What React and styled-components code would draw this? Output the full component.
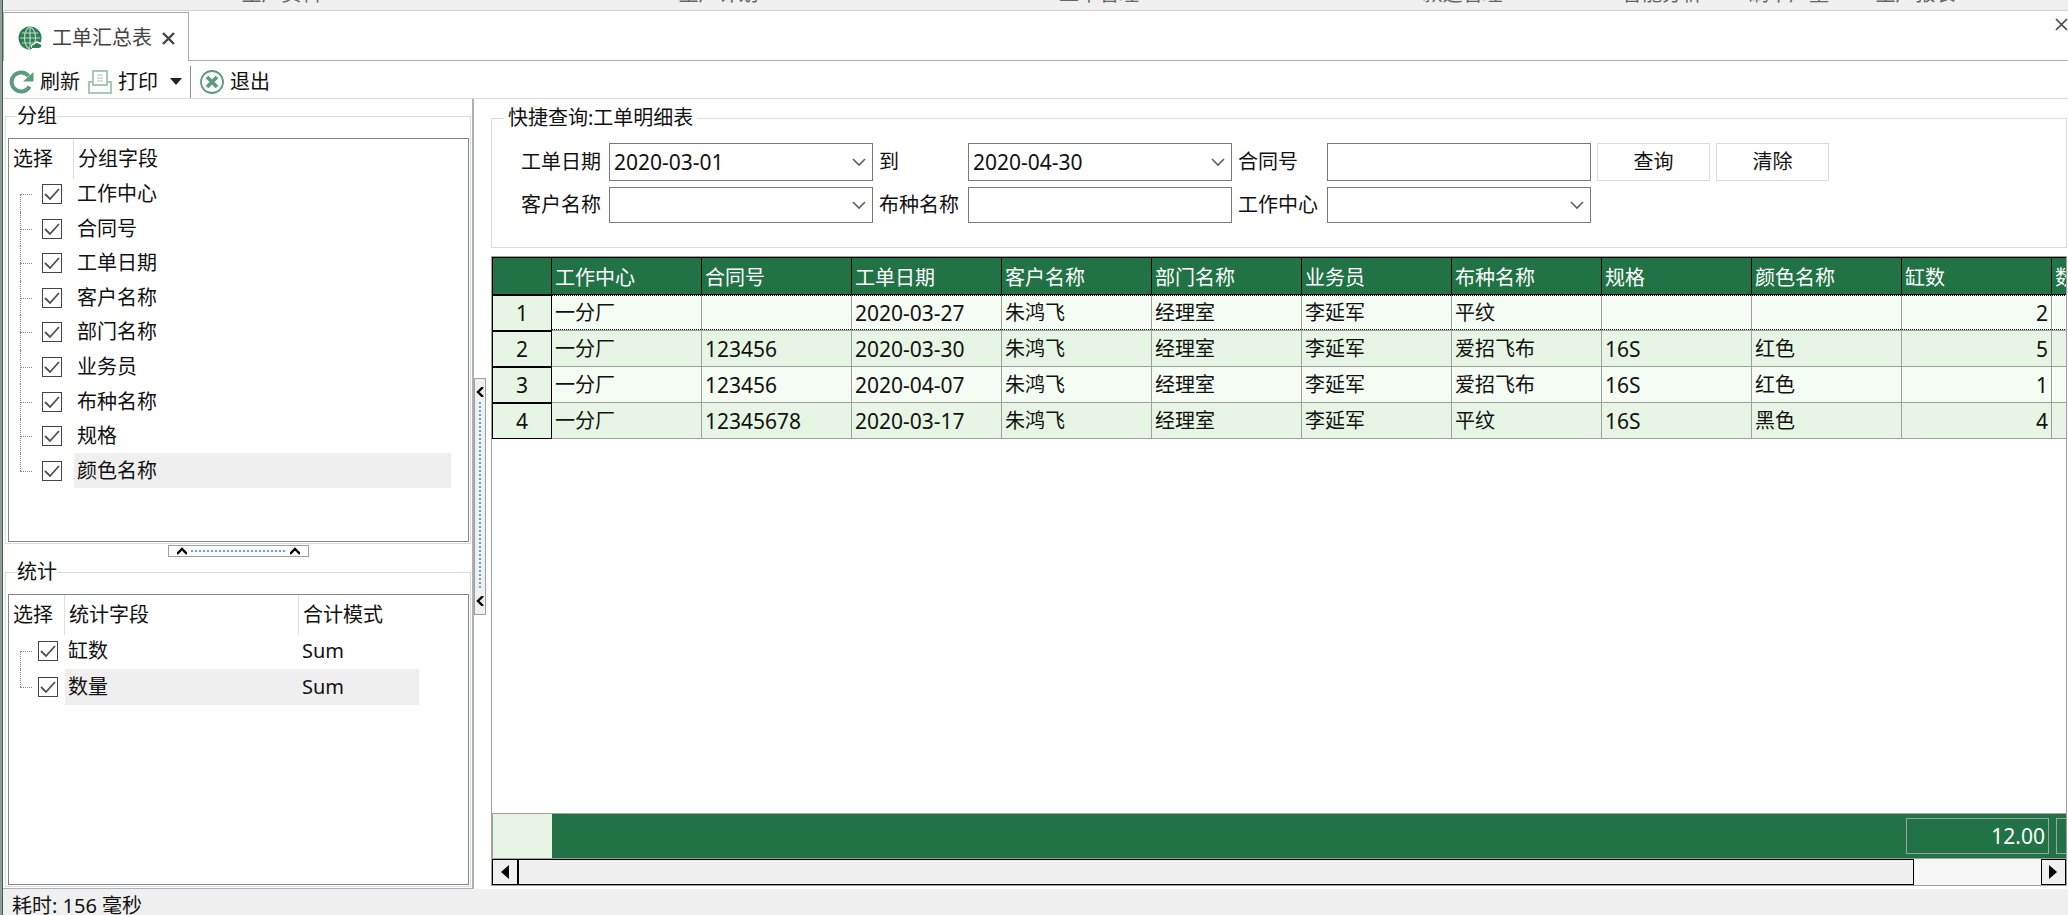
import React from "react";
import styled, { createGlobalStyle, css } from "styled-components";

const green = "#217346";
const grey = "#a0a0a0";
const iconGreen = "#5c9c7b";

const chevron = `url("data:image/svg+xml,%3Csvg xmlns='http://www.w3.org/2000/svg' width='14' height='10' fill='none' stroke='%23606060' stroke-width='1.6'%3E%3Cpath d='M1 2l6 6 6-6'/%3E%3C/svg%3E")`;
const tick = `url("data:image/svg+xml,%3Csvg xmlns='http://www.w3.org/2000/svg' width='18' height='18' fill='none' stroke='%23505050' stroke-width='1.8'%3E%3Cpath d='M2 9l5 5L16 4'/%3E%3C/svg%3E")`;

const GlobalStyle = createGlobalStyle`
  * {
    box-sizing: border-box;
  }
  body {
    margin: 0;
    background: #fff;
    color: #111;
    font: 20px/24px "Noto Sans", "Noto Sans CJK SC", sans-serif;
  }
  button,
  input,
  select {
    font: inherit;
    color: inherit;
  }
`;

const Frame = styled.div`
  border-left: 2px solid #999;
`;

const Window = styled.div`
  display: flex;
  flex-direction: column;
  height: 100vh;
  border-left: 1px solid ${green};
  overflow: hidden;
`;

const Ribbon = styled.nav`
  display: grid;
  grid-template-columns: 557fr 317fr 444fr 283fr 116fr 138fr 115fr 95fr;
  flex: none;
  height: 11px;
  overflow: hidden;
  background: #f0f0f0;
  border-bottom: 1px solid #d2d2d2;
`;

const RibbonGroup = styled.div`
  display: flex;
  align-items: flex-end;
  justify-content: center;
  height: 6px;
  color: #666;
  white-space: nowrap;
`;

const TabBar = styled.div`
  display: flex;
  flex: none;
  height: 50px;
  padding-top: 1px;
`;

const Tab = styled.div`
  display: flex;
  align-items: center;
  gap: 10px;
  padding: 2px 13px 0 14px;
  border: 1px solid #ababab;
  border-bottom: 0;
  color: #444;
`;

const TabRest = styled.div`
  display: flex;
  flex: 1;
  justify-content: flex-end;
  border-bottom: 1px solid #ababab;
  overflow: hidden;
`;

const CloseButton = styled.button`
  display: flex;
  align-items: center;
  height: 24px;
  padding: 0;
  border: 0;
  background: none;
`;

const Toolbar = styled.div`
  display: flex;
  align-items: center;
  flex: none;
  height: 38px;
  padding: 4px 0 0 6px;
  border-bottom: 1px solid #d9d9d9;
`;

const ToolButton = styled.button`
  display: flex;
  align-items: center;
  gap: 6px;
  padding: 0 8px 0 0;
  border: 0;
  background: none;
`;

const ToolDivider = styled.div`
  width: 1px;
  height: 32px;
  margin-right: 9px;
  background: #8a8a8a;
`;

const Body = styled.div`
  display: flex;
  flex: 1;
  min-height: 0;
`;

const Side = styled.aside`
  display: flex;
  flex-direction: column;
  flex: none;
  width: 471px;
  padding: 5px 1px 1px 2px;
  border-right: 2px solid #b0b0b0;
  border-bottom: 1px solid #b0b0b0;
`;

const GroupBox = styled.fieldset`
  display: flex;
  flex-direction: column;
  flex: ${(p) => (p.$fill ? "1" : "none")};
  min-width: 0;
  min-height: 0;
  height: ${(p) => (p.$fill ? "auto" : "440px")};
  margin: 0;
  padding: 10px 1px 1px 2px;
  border: 1px solid #dcdcdc;

  > legend {
    padding: 0;
    margin-left: 9px;
  }
`;

const TreeBox = styled.div`
  flex: 1;
  min-height: 0;
  border: 1px solid #828790;
`;

const TreeHead = styled.div`
  display: grid;
  grid-template-columns: ${(p) => p.$columns};
  height: 38px;
`;

const TreeHeadCell = styled.div`
  padding: 8px 4px;
  border-right: ${(p) => (p.$last ? "0" : "1px solid #e0e0e0")};
`;

const TreeRows = styled.div`
  display: grid;
  grid-auto-rows: 1fr;
  height: ${(p) => p.$height};
`;

const TreeRow = styled.div`
  display: grid;
  grid-template-columns: ${(p) => p.$columns};
  align-items: center;
  padding-right: ${(p) => p.$tail};
`;

const TreeStem = styled.div`
  position: relative;
  display: flex;
  align-items: center;
  justify-content: flex-end;
  height: 100%;
  padding-right: ${(p) => p.$gap};

  &::before {
    content: "";
    position: absolute;
    left: 11px;
    top: ${(p) => (p.$first ? "50%" : "0")};
    bottom: ${(p) => (p.$last ? "50%" : "0")};
    border-left: 1px dotted #888;
  }
  &::after {
    content: "";
    position: absolute;
    left: 11px;
    top: 50%;
    width: 12px;
    border-top: 1px dotted #888;
  }
`;

const Check = styled.input.attrs({ type: "checkbox" })`
  appearance: none;
  width: 20px;
  height: 20px;
  margin: 0;
  border: 1px solid #444;
  background: #fff;

  &:checked {
    background: #fff ${tick} center no-repeat;
  }
`;

const TreeLabel = styled.label`
  display: flex;
  align-items: center;
  height: 100%;
  padding-left: 3px;
  background: ${(p) => (p.$active ? "#efefef" : "transparent")};
`;

const HandleRow = styled.div`
  display: flex;
  justify-content: center;
  flex: none;
  height: 16px;
  padding-top: 1px;
`;

const Handle = styled.div`
  display: flex;
  flex-direction: ${(p) => (p.$vertical ? "column" : "row")};
  align-items: center;
  justify-content: space-between;
  width: ${(p) => (p.$vertical ? "12px" : "141px")};
  height: ${(p) => (p.$vertical ? "237px" : "12px")};
  padding: ${(p) => (p.$vertical ? "8px 0" : "0 8px")};
  border: 1px solid ${grey};
  background: ${(p) => (p.$vertical ? "#f0f0f0" : "#fff")};
`;

const Dots = styled.div`
  ${(p) =>
    p.$vertical
      ? css`
          width: 2px;
          height: 188px;
          background: repeating-linear-gradient(#5aa7e0 0 2px, transparent 2px 4px);
        `
      : css`
          width: 94px;
          height: 2px;
          background: repeating-linear-gradient(90deg, #5aa7e0 0 2px, transparent 2px 4px);
        `}
`;

const Gutter = styled.div`
  display: flex;
  align-items: center;
  flex: none;
  width: 17px;
  padding-top: 4px;
`;

const Main = styled.main`
  display: flex;
  flex-direction: column;
  flex: 1;
  min-width: 0;
  padding: 7px 1px 3px 0;
`;

const QueryBox = styled.fieldset`
  flex: none;
  min-width: 0;
  margin: 0 0 8px;
  padding: 13px 0 24px 29px;
  border: 1px solid #dcdcdc;

  > legend {
    margin-left: -17px;
    padding: 0 4px;
  }
`;

const QueryForm = styled.form`
  display: grid;
  grid-template-columns:
    88px minmax(0, 264px) 95px minmax(0, 264px) 95px minmax(0, 264px)
    113px 113px;
  grid-template-rows: 38px 36px;
  row-gap: 6px;
`;

const FieldLabel = styled.label`
  align-self: center;
  padding-left: ${(p) => (p.$first ? "0" : "6px")};
  white-space: nowrap;
`;

const field = css`
  width: 100%;
  height: 100%;
  padding: 0 4px;
  border: 1px solid #7a7a7a;
  border-radius: 0;
  background: #fff;
`;

const TextField = styled.input`
  ${field}
`;

const SelectField = styled.select`
  ${field}
  appearance: none;
  font-size: 21px;
  background: #fff ${chevron} right 6px center no-repeat;
`;

const QueryButton = styled.button`
  margin-left: 6px;
  margin-right: -6px;
  padding: 0;
  border: 1px solid #dcdcdc;
  background: #fff;

  & + & {
    margin-left: 12px;
    margin-right: -12px;
  }
`;

const GridPanel = styled.section`
  display: flex;
  flex-direction: column;
  flex: 1;
  min-height: 0;
  border: 1px solid ${grey};
`;

const GridView = styled.div`
  flex: 1;
  min-height: 0;
  overflow: hidden;
`;

const DataTable = styled.table`
  width: 1710px;
  table-layout: fixed;
  border-collapse: separate;
  border-spacing: 0;
  border-left: 1px solid #000;
`;

const HeadCell = styled.th`
  width: ${(p) => (p.$index ? "59px" : "150px")};
  height: 38px;
  padding: 3px 3px 0;
  border: solid #000;
  border-width: 1px 1px 1px 0;
  background: ${green};
  color: #fff;
  font-weight: 400;
  text-align: left;
`;

const IndexCell = styled.th`
  height: 36px;
  padding: 0;
  border: solid #000;
  border-width: 1px 1px 1px 0;
  background: #e7f6e4;
  font-size: 21px;
  font-weight: 400;
`;

const Row = styled.tr`
  background: ${(p) => (p.$odd ? "#f5fcf4" : "#e7f6e4")};
`;

const focusLine =
  "repeating-linear-gradient(90deg, #000 0 1px, transparent 1px 2px)";

const Cell = styled.td`
  height: 36px;
  padding: 0 3px;
  border: solid ${grey};
  border-width: 0 1px 1px 0;
  font-size: ${(p) => (p.$latin ? "21px" : "20px")};
  text-align: ${(p) => (p.$right ? "right" : "left")};
  ${(p) =>
    p.$focused &&
    css`
      background:
        ${focusLine} top / 100% 1px no-repeat,
        ${focusLine} bottom / 100% 1px no-repeat;
      background-clip: padding-box;
    `}
`;

const Summary = styled.div`
  display: grid;
  grid-template-columns: 60px 1fr 143px 17px;
  flex: none;
  height: 46px;
  border: solid ${grey};
  border-width: 1px 0;
  background: ${green};
  color: #fff;
`;

const SummaryIndex = styled.div`
  background: #e7f6e4;
  border-left: 1px solid ${grey};
`;

const SummaryTotal = styled.div`
  grid-column: 3;
  display: flex;
  align-items: center;
  justify-content: flex-end;
  margin: 4px 0;
  padding-right: 3px;
  border: 1px solid ${grey};
  font-size: 21px;
`;

const SummaryNext = styled.div`
  margin: 4px 0 4px 7px;
  border: 1px solid ${grey};
  border-right: 0;
`;

const ScrollBar = styled.div`
  display: grid;
  grid-template-columns: 26px 1397fr 127fr 25px;
  flex: none;
  height: 26px;
  background: #f7f7f7;
`;

const ScrollButton = styled.button`
  grid-column: ${(p) => (p.$end ? 4 : 1)};
  display: flex;
  align-items: center;
  justify-content: center;
  padding: 0;
  border: 1px solid #000;
  background: #f0f0f0;
`;

const ScrollThumb = styled.div`
  border: 1px solid #000;
  background: #f0f0f0;
`;

const StatusBar = styled.footer`
  flex: none;
  height: 26px;
  padding: 5px 9px 0;
  overflow: hidden;
  background: #f0f0f0;
`;

const ribbonGroups = [
  "生产资料",
  "生产计划",
  "工单管理",
  "款选管理",
  "智能分析",
  "刷卡产量",
  "生产报表",
  "",
];

const groupFields = [
  "工作中心",
  "合同号",
  "工单日期",
  "客户名称",
  "部门名称",
  "业务员",
  "布种名称",
  "规格",
  "颜色名称",
];

const statFields = ["缸数", "数量"];

const columns = [...groupFields, "缸数", "数量"];

const orders = [
  ["一分厂", "", "2020-03-27", "朱鸿飞", "经理室", "李延军", "平纹", "", "", "2", ""],
  ["一分厂", "123456", "2020-03-30", "朱鸿飞", "经理室", "李延军", "爱招飞布", "16S", "红色", "5", ""],
  ["一分厂", "123456", "2020-04-07", "朱鸿飞", "经理室", "李延军", "爱招飞布", "16S", "红色", "1", ""],
  ["一分厂", "12345678", "2020-03-17", "朱鸿飞", "经理室", "李延军", "平纹", "16S", "黑色", "4", ""],
];

const GlobeIcon = () => (
  <svg width="24" height="24" viewBox="0 0 24 24" fill="none">
    <circle cx="12" cy="12" r="11.5" fill="#2f7d55" />
    <g stroke="#b9d8c7" strokeWidth="1.2">
      <path d="M12 2v20M4 7h16M2 12h20M4 17h16" />
      <ellipse cx="12" cy="12" rx="5.5" ry="10.5" />
    </g>
    <path d="M12 24l1-5 3-2 3-2 4 2 1 7z" fill="#fff" />
    <path d="M14 22a2 2 0 0 1 2-3 3 3 0 0 1 5-1 2 2 0 0 1 2 3l-2 1z" fill="#2f7d55" />
    <path d="M12 19l2 4h-2z" fill="#2f7d55" />
  </svg>
);

const RefreshIcon = () => (
  <svg width="25" height="24" viewBox="0 0 25 24" fill="none">
    <path d="M20.5 16.5A9.5 9.5 0 1 1 19.5 6" stroke={iconGreen} strokeWidth="4" />
    <path d="M24.5 2v9.5H14z" fill={iconGreen} />
  </svg>
);

const PrintIcon = () => (
  <svg width="24" height="24" viewBox="0 0 24 24" fill="none" stroke="#a5cbb5" strokeWidth="2">
    <path d="M5 12H1v11h22V12h-4" />
    <path d="M5 15V1h14v14z" />
    <path d="M9 5h6M9 8h6M9 11h6" strokeWidth="1" />
  </svg>
);

const ExitIcon = () => (
  <svg width="24" height="24" viewBox="0 0 24 24" fill="none" stroke={iconGreen}>
    <circle cx="12" cy="12" r="11" strokeWidth="1.8" />
    <path d="M7 7l10 10M17 7L7 17" strokeWidth="3.8" />
  </svg>
);

const CrossIcon = ({ width = 2.4 }) => (
  <svg width="13" height="13" viewBox="0 0 13 13" stroke="#444" strokeWidth={width}>
    <path d="M1 1l11 11M12 1L1 12" />
  </svg>
);

const Caret = ({ left }) => (
  <svg width="10" height="10" viewBox="0 0 10 10" fill="none" stroke="#000" strokeWidth="2.4">
    <path d={left ? "M8 0L3 5l5 5" : "M0 8l5-5 5 5"} />
  </svg>
);

const GroupFieldTree = () => (
  <GroupBox>
    <legend>分组</legend>
    <TreeBox>
      <TreeHead $columns="65px 1fr">
        <TreeHeadCell>选择</TreeHeadCell>
        <TreeHeadCell $last>分组字段</TreeHeadCell>
      </TreeHead>
      <TreeRows $height="311px">
        {groupFields.map((name, i) => {
          const last = i === groupFields.length - 1;
          return (
            <TreeRow key={name} $columns="65px 1fr" $tail="17px">
              <TreeStem $gap="12px" $first={i === 0} $last={last}>
                <Check id={`group-${i}`} defaultChecked />
              </TreeStem>
              <TreeLabel htmlFor={`group-${i}`} $active={last}>
                {name}
              </TreeLabel>
            </TreeRow>
          );
        })}
      </TreeRows>
    </TreeBox>
  </GroupBox>
);

const StatFieldTree = () => (
  <GroupBox $fill>
    <legend>统计</legend>
    <TreeBox>
      <TreeHead $columns="56px 234px 1fr">
        <TreeHeadCell>选择</TreeHeadCell>
        <TreeHeadCell>统计字段</TreeHeadCell>
        <TreeHeadCell $last>合计模式</TreeHeadCell>
      </TreeHead>
      <TreeRows $height="72px">
        {statFields.map((name, i) => (
          <TreeRow key={name} $columns="56px 234px 1fr" $tail="49px">
            <TreeStem $gap="7px" $first={i === 0} $last={i === 1}>
              <Check id={`stat-${i}`} defaultChecked />
            </TreeStem>
            <TreeLabel htmlFor={`stat-${i}`} $active={i === 1}>
              {name}
            </TreeLabel>
            <TreeLabel as="div" $active={i === 1}>
              Sum
            </TreeLabel>
          </TreeRow>
        ))}
      </TreeRows>
    </TreeBox>
  </GroupBox>
);

const QueryPanel = () => (
  <QueryBox>
    <legend>快捷查询:工单明细表</legend>
    <QueryForm onSubmit={(e) => e.preventDefault()}>
      <FieldLabel $first htmlFor="from">
        工单日期
      </FieldLabel>
      <SelectField id="from">
        <option>2020-03-01</option>
      </SelectField>
      <FieldLabel htmlFor="to">到</FieldLabel>
      <SelectField id="to">
        <option>2020-04-30</option>
      </SelectField>
      <FieldLabel htmlFor="contract">合同号</FieldLabel>
      <TextField id="contract" />
      <QueryButton type="submit">查询</QueryButton>
      <QueryButton type="reset">清除</QueryButton>
      <FieldLabel $first htmlFor="customer">
        客户名称
      </FieldLabel>
      <SelectField id="customer">
        <option></option>
      </SelectField>
      <FieldLabel htmlFor="fabric">布种名称</FieldLabel>
      <TextField id="fabric" />
      <FieldLabel htmlFor="center">工作中心</FieldLabel>
      <SelectField id="center">
        <option></option>
      </SelectField>
    </QueryForm>
  </QueryBox>
);

const OrderGrid = () => (
  <GridPanel>
    <GridView>
      <DataTable>
        <thead>
          <tr>
            <HeadCell $index />
            {columns.map((name) => (
              <HeadCell key={name}>{name}</HeadCell>
            ))}
          </tr>
        </thead>
        <tbody>
          {orders.map((order, i) => (
            <Row key={i} $odd={i % 2 === 0}>
              <IndexCell>{i + 1}</IndexCell>
              {order.map((value, j) => (
                <Cell
                  key={j}
                  $focused={i === 0}
                  $right={j > 8}
                  $latin={/^[\x20-\x7e]+$/.test(value)}
                >
                  {value}
                </Cell>
              ))}
            </Row>
          ))}
        </tbody>
      </DataTable>
    </GridView>
    <Summary>
      <SummaryIndex />
      <SummaryTotal>12.00</SummaryTotal>
      <SummaryNext />
    </Summary>
    <ScrollBar>
      <ScrollButton aria-label="left">
        <svg width="8" height="14">
          <path d="M8 0v14L0 7z" />
        </svg>
      </ScrollButton>
      <ScrollThumb />
      <ScrollButton $end aria-label="right">
        <svg width="8" height="14">
          <path d="M0 0v14l8-7z" />
        </svg>
      </ScrollButton>
    </ScrollBar>
  </GridPanel>
);

const App = () => {
  return (
    <Frame>
      <GlobalStyle />
      <Window>
        <Ribbon>
          {ribbonGroups.map((name, i) => (
            <RibbonGroup key={i}>{name}</RibbonGroup>
          ))}
        </Ribbon>
        <TabBar>
          <Tab>
            <GlobeIcon />
            工单汇总表
            <CloseButton aria-label="close tab">
              <CrossIcon />
            </CloseButton>
          </Tab>
          <TabRest>
            <CloseButton aria-label="close">
              <CrossIcon width={1.6} />
            </CloseButton>
          </TabRest>
        </TabBar>
        <Toolbar>
          <ToolButton>
            <RefreshIcon />
            刷新
          </ToolButton>
          <ToolButton>
            <PrintIcon />
            打印
            <svg width="18" height="7">
              <path d="M6 0h12l-6 7z" fill="#222" />
            </svg>
          </ToolButton>
          <ToolDivider />
          <ToolButton>
            <ExitIcon />
            退出
          </ToolButton>
        </Toolbar>
        <Body>
          <Side>
            <GroupFieldTree />
            <HandleRow>
              <Handle>
                <Caret />
                <Dots />
                <Caret />
              </Handle>
            </HandleRow>
            <StatFieldTree />
          </Side>
          <Gutter>
            <Handle $vertical>
              <Caret left />
              <Dots $vertical />
              <Caret left />
            </Handle>
          </Gutter>
          <Main>
            <QueryPanel />
            <OrderGrid />
          </Main>
        </Body>
        <StatusBar>耗时: 156 毫秒</StatusBar>
      </Window>
    </Frame>
  );
};

export default App;
